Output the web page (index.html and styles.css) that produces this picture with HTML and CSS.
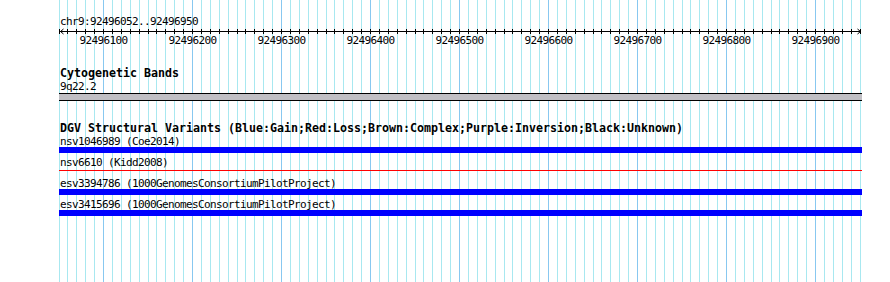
FILE: index.html
```html
<!DOCTYPE html>
<html lang="en">
<head>
    <meta charset="UTF-8">
    <title>chr9:92496052..92496950</title>
    <link rel="stylesheet" href="styles.css">
</head>
<body>
    <div class="panel">
        <div class="ruler-label">chr9:92496052..92496950</div>
        <svg class="ruler" width="803" height="20" viewBox="0 0 803 20">
            <defs>
                <pattern id="ticks" x="44" y="0" width="89" height="20" patternUnits="userSpaceOnUse">
                    <rect x="0" y="1" width="1" height="5"/>
                    <rect x="9" y="1" width="1" height="5"/>
                    <rect x="18" y="1" width="1" height="5"/>
                    <rect x="27" y="1" width="1" height="5"/>
                    <rect x="36" y="1" width="1" height="5"/>
                    <rect x="45" y="1" width="1" height="5"/>
                    <rect x="53" y="1" width="1" height="5"/>
                    <rect x="62" y="1" width="1" height="5"/>
                    <rect x="71" y="1" width="1" height="5"/>
                    <rect x="80" y="1" width="1" height="5"/>
                </pattern>
            </defs>
            <rect x="0" y="0" width="802" height="7" fill="url(#ticks)"/>
            <line x1="1" y1="3.5" x2="802" y2="3.5" stroke="#000"/>
            <polyline points="4.5,1 1.5,3.5 4.5,6" fill="none" stroke="#000"/>
            <polyline points="798.5,1 801.5,3.5 798.5,6" fill="none" stroke="#000"/>
            <text x="44.5" y="16">92496100</text>
            <text x="133.5" y="16">92496200</text>
            <text x="222.5" y="16">92496300</text>
            <text x="311.5" y="16">92496400</text>
            <text x="400.5" y="16">92496500</text>
            <text x="489.5" y="16">92496600</text>
            <text x="578.5" y="16">92496700</text>
            <text x="667.5" y="16">92496800</text>
            <text x="756.5" y="16">92496900</text>
        </svg>

        <section class="track cyto">
            <div class="track-title">Cytogenetic Bands</div>
            <div class="feature-label">9q22.2</div>
            <div class="band"></div>
        </section>

        <section class="track dgv">
            <div class="track-title">DGV Structural Variants (Blue:Gain;Red:Loss;Brown:Complex;Purple:Inversion;Black:Unknown)</div>
            <div class="feature">
                <div class="feature-label">nsv1046989 (Coe2014)</div>
                <div class="glyph gain"></div>
            </div>
            <div class="feature">
                <div class="feature-label">nsv6610 (Kidd2008)</div>
                <div class="glyph loss"></div>
            </div>
            <div class="feature">
                <div class="feature-label">esv3394786 (1000GenomesConsortiumPilotProject)</div>
                <div class="glyph gain"></div>
            </div>
            <div class="feature">
                <div class="feature-label">esv3415696 (1000GenomesConsortiumPilotProject)</div>
                <div class="glyph gain"></div>
            </div>
        </section>
    </div>
</body>
</html>
```

FILE: styles.css
```css
body {
    margin: 0;
    background-color: white;
    color: black;
    font-family: "DejaVu Sans Mono", "Liberation Mono", monospace;
    font-size: 11px;
    letter-spacing: -0.62px;
}

/* grid: one major line every 100bp, minor every 10bp (89px tile) */
.panel {
    box-sizing: border-box;
    width: 803px;
    height: 282px;
    margin-left: 59px;
    padding-top: 15px;
    background-image: linear-gradient(to right,
        #88c8f0 0 1px, transparent 1px 9px,
        #a8e8f0 9px 10px, transparent 10px 18px,
        #a8e8f0 18px 19px, transparent 19px 27px,
        #a8e8f0 27px 28px, transparent 28px 36px,
        #a8e8f0 36px 37px, transparent 37px 45px,
        #a8e8f0 45px 46px, transparent 46px 53px,
        #a8e8f0 53px 54px, transparent 54px 62px,
        #a8e8f0 62px 63px, transparent 63px 71px,
        #a8e8f0 71px 72px, transparent 72px 80px,
        #a8e8f0 80px 81px, transparent 81px 89px);
    background-size: 89px 100%;
    background-position: 44px 0;
    background-repeat: repeat-x;
}

.ruler-label {
    padding-left: 1px;
    line-height: 13px;
}

.ruler {
    display: block;
}

.ruler text {
    font-family: "DejaVu Sans Mono", "Liberation Mono", monospace;
    font-size: 11px;
    letter-spacing: -0.62px;
    text-anchor: middle;
}

.track-title {
    padding-left: 1px;
    font-weight: bold;
    font-size: 11.63px;
    letter-spacing: 0;
    line-height: 13px;
}

.cyto {
    margin-top: 19px;
}

.cyto .feature-label {
    padding-top: 0;
    line-height: 13px;
}

.band {
    height: 6px;
    background-color: #c0bfc4;
    border-top: 1px solid black;
    border-bottom: 1px solid black;
}

.dgv {
    margin-top: 21px;
}

.feature-label {
    padding-top: 1px;
    padding-left: 1px;
    line-height: 11px;
    white-space: nowrap;
}

.glyph {
    height: 6px;
    margin-bottom: 3px;
}

.gain {
    background-color: #0000ff;
}

.loss {
    height: 1px;
    margin-top: 2px;
    margin-bottom: 6px;
    background-color: #ff0000;
}
```
